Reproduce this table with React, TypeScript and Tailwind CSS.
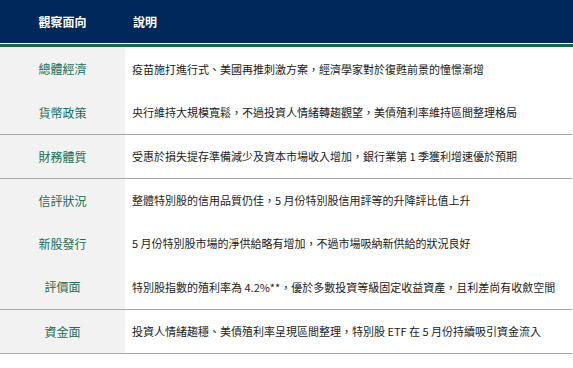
import React from "react";

type Row = { k: string; v: React.ReactNode; h: number; border?: boolean };

const rows: Row[] = [
  { k: "總體經濟", v: "疫苗施打進行式、美國再推刺激方案，經濟學家對於復甦前景的憧憬漸增", h: 44 },
  { k: "貨幣政策", v: "央行維持大規模寬鬆，不過投資人情緒轉趨觀望，美債殖利率維持區間整理格局", h: 43, border: true },
  { k: "財務體質", v: "受惠於損失提存準備減少及資本市場收入增加，銀行業第 1 季獲利增速優於預期", h: 43, border: true },
  { k: "信評狀況", v: "整體特別股的信用品質仍佳，5 月份特別股信用評等的升降評比值上升", h: 43 },
  { k: "新股發行", v: "5 月份特別股市場的淨供給略有增加，不過市場吸納新供給的狀況良好", h: 43 },
  { k: "評價面", v: "特別股指數的殖利率為 4.2%**，優於多數投資等級固定收益資產，且利差尚有收斂空間", h: 44, border: true },
  { k: "資金面", v: "投資人情緒趨穩、美債殖利率呈現區間整理，特別股 ETF 在 5 月份持續吸引資金流入", h: 43, border: true },
];

export default function App() {
  return (
    <div
      className="w-[573px] h-[368px] bg-white overflow-hidden"
      style={{ fontFamily: '"Noto Sans CJK TC", "Noto Sans", sans-serif' }}
    >
      <div className="flex h-[43px] items-center bg-[#00285a] text-white font-bold text-[12px]">
        <div className="w-[125px] text-center">觀察面向</div>
        <div className="pl-[8px]">說明</div>
      </div>
      <div className="h-px bg-white" />
      <div className="h-[3px] bg-[#17654f]" />
      <div className="w-[572px]">
        {rows.map((r) => (
          <div
            key={r.k}
            className={`flex ${r.border ? "border-b border-[#a6a6a6]" : ""}`}
            style={{ height: r.h + (r.border ? 1 : 0) }}
          >
            <div className="w-[125px] shrink-0 bg-[#f2f2f2] flex items-center justify-center text-[12px] text-[#1a6e55]">
              {r.k}
            </div>
            <div className="flex-1 flex items-center pl-[7px] text-[11px] text-[#1a1a1a] whitespace-nowrap">
              {r.v}
            </div>
          </div>
        ))}
      </div>
    </div>
  );
}
